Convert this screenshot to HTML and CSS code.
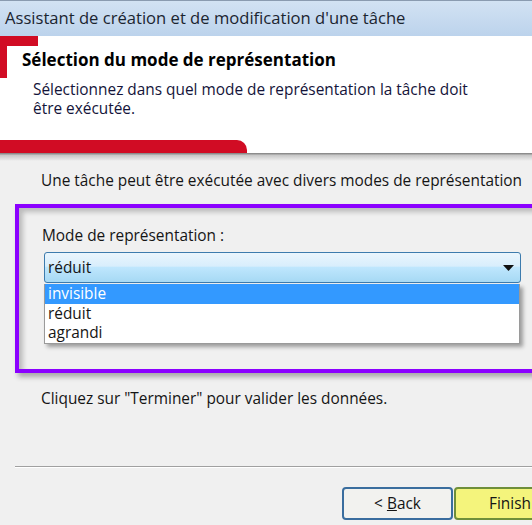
FILE: index.html
```html
<!DOCTYPE html>
<html lang="fr">
<head>
<meta charset="utf-8">
<link rel="stylesheet" href="styles.css">
</head>
<body>
<div class="window">
  <div class="titlebar">Assistant de création et de modification d'une tâche</div>
  <div class="header">
    <div class="header-text">
      <div class="header-title">Sélection du mode de représentation</div>
      <div class="header-sub">Sélectionnez dans quel mode de représentation la tâche doit<br>être exécutée.</div>
    </div>
    <div class="red-band"></div>
  </div>
  <div class="header-shadow"></div>
  <div class="content">
    <p class="intro">Une tâche peut être exécutée avec divers modes de représentation</p>
    <div class="group">
      <div class="group-label">Mode de représentation :</div>
      <div class="combo">
        <span>réduit</span>
        <svg class="arrow" width="11" height="6" viewBox="0 0 11 6"><path d="M0 0H11L5.5 6Z" fill="#111"/></svg>
      </div>
      <ul class="listbox">
        <li class="selected">invisible</li>
        <li>réduit</li>
        <li>agrandi</li>
      </ul>
    </div>
    <p class="hint">Cliquez sur "Terminer" pour valider les données.</p>
  </div>
  <div class="separator"></div>
  <div class="buttons">
    <button class="btn back">&lt; <u>B</u>ack</button>
    <button class="btn finish">Finish</button>
  </div>
</div>
</body>
</html>
```
FILE: styles.css
```css
html, body {
  margin: 0;
  padding: 0;
}
body {
  width: 532px;
  height: 525px;
  overflow: hidden;
  background: #f0f0f0;
  font-family: "Open Sans", "Noto Sans", sans-serif;
  font-size: 15.4px;
  color: #151515;
}
.window {
  display: flex;
  flex-direction: column;
  width: 532px;
  height: 525px;
}
.window > * {
  flex: none;
}
.titlebar {
  height: 35px;
  border-top: 1px solid #8a9bb0;
  background: linear-gradient(#d2e2f3, #bcd3ec);
  padding-left: 5px;
  line-height: 33px;
  font-size: 16.6px;
  color: #1b2530;
  white-space: nowrap;
}
.header {
  position: relative;
  height: 117px;
  background: #ffffff;
  display: flex;
  flex-direction: column;
}
.header::before {
  content: "";
  position: absolute;
  left: 0;
  top: 0;
  width: 31px;
  height: 32px;
  border-top: 10px solid #d10c24;
  border-left: 7px solid #d10c24;
}
.header-text {
  flex: 1;
  padding-top: 13px;
}
.header-title {
  padding-left: 22px;
  font-weight: bold;
  font-size: 17px;
  line-height: 22px;
  color: #000;
  white-space: nowrap;
}
.header-sub {
  padding-left: 33px;
  margin-top: 9px;
  line-height: 19px;
  color: #14143a;
  white-space: nowrap;
}
.red-band {
  flex: none;
  width: 247px;
  height: 13px;
  background: #d10c24;
  border-top-right-radius: 10px;
}
.header-shadow {
  height: 8px;
  background: linear-gradient(#7c7c7c, #c8c8c8 30%, #f0f0f0);
}
.content {
  display: flex;
  flex-direction: column;
}
.intro {
  margin: 10px 0 0 41px;
  line-height: 20px;
  white-space: nowrap;
}
.group {
  margin: 13px -20px 0 15px;
  border: 4px solid #8b00ff;
  padding: 19px 0 25px 25px;
  box-shadow: inset 4px 4px 5px rgba(0, 0, 0, 0.22), 3px 4px 5px rgba(0, 0, 0, 0.3);
}
.group-label {
  line-height: 18px;
  margin-left: -2px;
}
.combo {
  margin-top: 7px;
  height: 29px;
  border: 1px solid #3d7bad;
  border-radius: 3px;
  background: linear-gradient(#eaf5fd 0%, #d8eefc 45%, #bee6fd 50%, #a6d9f4 100%);
  display: flex;
  align-items: center;
  justify-content: space-between;
  padding: 0 6px 0 3px;
  width: 466px;
}
.arrow {
  display: block;
}
.listbox {
  list-style: none;
  margin: 1px 0 0 0;
  padding: 0;
  width: 474px;
  background: #fff;
  border: 1px solid #9a9a9a;
  border-top: none;
  box-shadow: 3px 3px 4px rgba(0, 0, 0, 0.35);
}
.listbox li {
  height: 19.5px;
  line-height: 19px;
  padding-left: 3px;
}
.listbox li.selected {
  background: #3399ff;
  color: #fff;
}
.hint {
  margin: 17px 0 0 41px;
  line-height: 18px;
  white-space: nowrap;
}
.separator {
  margin: 58px 0 0 15px;
  height: 1px;
  background: #a0a0a0;
  border-bottom: 1px solid #ffffff;
}
.buttons {
  display: flex;
  gap: 1px;
  margin-top: 19px;
  padding-left: 342px;
}
.btn {
  flex: none;
  height: 33px;
  width: 111px;
  font-family: inherit;
  font-size: 15.4px;
  color: #151515;
  border-radius: 4px;
  padding: 0;
}
.back {
  background: #f2f2ef;
  border: 2px solid #3a6d9e;
}
.finish {
  background: #f4f47c;
  border: 2px solid #6f8f3a;
  text-align: left;
  padding-left: 33px;
}
```
